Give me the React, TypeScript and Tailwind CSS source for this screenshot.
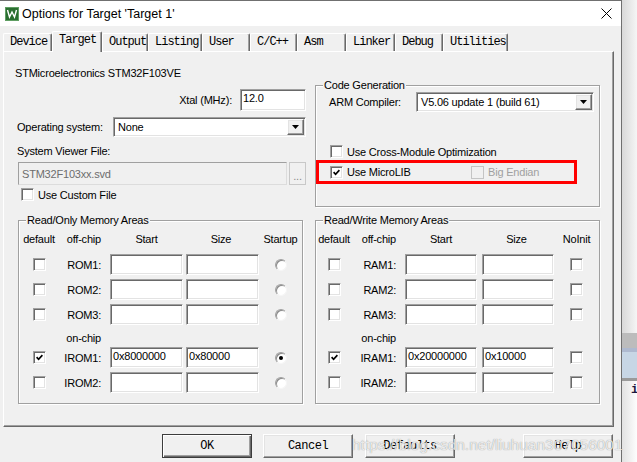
import React from 'react'

const sunken =
  'border border-t-[#a0a0a0] border-l-[#a0a0a0] border-b-white border-r-white shadow-[inset_1px_1px_0_#696969,inset_-1px_-1px_0_#e3e3e3]'
const raised =
  'border border-t-white border-l-white border-b-[#696969] border-r-[#696969] shadow-[inset_-1px_-1px_0_#a0a0a0,inset_1px_1px_0_#e3e3e3]'

function Check({ checked = false, disabled = false }: { checked?: boolean; disabled?: boolean }) {
  return (
    <span
      className={`flex h-[13px] w-[13px] shrink-0 items-center justify-center ${
        disabled ? 'border border-[#c4c4c4] bg-[#f0f0f0]' : `bg-white ${sunken}`
      }`}
    >
      {checked && (
        <svg width="7" height="7" viewBox="0 0 7 7">
          <path d="M0.6 3.2 L2.6 5.3 L6.4 1.2" stroke="#000" strokeWidth="1.7" fill="none" />
        </svg>
      )}
    </span>
  )
}

function Radio({ on = false }: { on?: boolean }) {
  return (
    <span className="flex h-[12px] w-[12px] items-center justify-center rounded-full border border-t-[#a0a0a0] border-l-[#a0a0a0] border-b-[#f5f5f5] border-r-[#f5f5f5] bg-white shadow-[inset_1px_1px_0_#8a8a8a]">
      {on && <span className="h-[4px] w-[4px] rounded-full bg-black" />}
    </span>
  )
}

function Field({ value = '', className = '' }: { value?: string; className?: string }) {
  return (
    <div className={`h-[21px] shrink-0 bg-white pl-[2px] pt-[1px] leading-[15px] ${sunken} ${className}`}>
      {value}
    </div>
  )
}

function Select({ value, className = '' }: { value: string; className?: string }) {
  return (
    <div className={`flex h-[20px] shrink-0 bg-white p-[1px] ${sunken} ${className}`}>
      <span className="flex-1 self-center pl-[3px]">{value}</span>
      <span className={`flex w-[17px] items-center justify-center bg-[#f0f0f0] ${raised}`}>
        <svg width="7" height="4" viewBox="0 0 7 4">
          <path d="M0 0 H7 L3.5 4 Z" fill="#000" />
        </svg>
      </span>
    </div>
  )
}

function Group({ title, className = '', children }: { title: string; className?: string; children?: React.ReactNode }) {
  return (
    <div className={`relative shrink-0 border border-[#a0a0a0] shadow-[1px_1px_0_#fff,inset_1px_1px_0_#fff] ${className}`}>
      <span className="absolute left-[7px] top-[-8px] bg-[#f0f0f0] px-[1px] leading-[14px]">{title}</span>
      {children}
    </div>
  )
}

type Mem = { label: string; checked?: boolean; start?: string; size?: string; on?: boolean }
type Cols = { a: string; b: string; f: string; g: string; e: string }

function MemArea({
  title,
  last,
  radio,
  off,
  chip,
  c,
  className,
}: {
  title: string
  last: string
  radio?: boolean
  off: Mem[]
  chip: Mem[]
  c: Cols
  className: string
}) {
  const row = (r: Mem, mt: string) => (
    <div key={r.label} className={`flex h-[21px] items-center ${mt}`}>
      <div className={`flex shrink-0 justify-center ${c.a}`}>
        <Check checked={r.checked} />
      </div>
      <div className={`shrink-0 text-right ${c.b}`}>{r.label}</div>
      <Field className={c.f} value={r.start} />
      <Field className={c.g} value={r.size} />
      <div className={`flex shrink-0 justify-center ${c.e}`}>{radio ? <Radio on={r.on} /> : <Check />}</div>
    </div>
  )
  return (
    <Group title={title} className={className}>
      <div className="mt-[11px] flex h-[14px]">
        <div className={`shrink-0 text-center ${c.a}`}>default</div>
        <div className={`shrink-0 text-right ${c.b}`}>off-chip</div>
        <div className={`shrink-0 text-center ${c.f}`}>Start</div>
        <div className={`shrink-0 pr-[3px] text-center ${c.g}`}>Size</div>
        <div className={`shrink-0 text-center ${c.e}`}>{last}</div>
      </div>
      {off.map((r, i) => row(r, i === 0 ? 'mt-[8px]' : 'mt-[4px]'))}
      <div className="mt-[6px] flex h-[14px]">
        <div className={`shrink-0 ${c.a}`} />
        <div className={`shrink-0 text-right ${c.b}`}>on-chip</div>
      </div>
      {chip.map((r, i) => row(r, i === 0 ? 'mt-[2px]' : 'mt-[4px]'))}
    </Group>
  )
}

const tabs = [
  { name: 'Device', w: 'w-[49px]' },
  { name: 'Target', w: 'w-[50px]', active: true },
  { name: 'Output', w: 'w-[46px]' },
  { name: 'Listing', w: 'w-[54px]' },
  { name: 'User', w: 'w-[48px]' },
  { name: 'C/C++', w: 'w-[47px]' },
  { name: 'Asm', w: 'w-[49px]' },
  { name: 'Linker', w: 'w-[49px]' },
  { name: 'Debug', w: 'w-[48px]' },
  { name: 'Utilities', w: 'w-[65px]' },
]

function Btn({ label, def = false, className = '' }: { label: string; def?: boolean; className?: string }) {
  return (
    <div
      className={`flex h-[24px] w-[90px] shrink-0 items-center justify-center bg-[#f0f0f0] ${
        def
          ? 'border border-[#3c3c3c] shadow-[inset_1px_1px_0_#fff,inset_-1px_-1px_0_#696969,inset_-2px_-2px_0_#a0a0a0]'
          : raised
      } ${className}`}
    >
      {label}
    </div>
  )
}

export default function App() {
  return (
    <div className="relative flex h-[462px] w-[637px] overflow-hidden bg-white font-['Liberation_Sans',Arial,sans-serif] text-[11px] leading-[14px] tracking-[-0.2px] text-black">
      {/* dialog window */}
      <div className="flex h-full w-[622px] shrink-0 flex-col border-r border-t border-[#707070] bg-[#f0f0f0]">
        {/* title bar */}
        <div className="flex h-[25px] shrink-0 items-center bg-white">
          <svg className="ml-[5px]" width="14" height="14" viewBox="0 0 14 14">
            <rect x="0.5" y="0.5" width="13" height="13" fill="#2a6e30" stroke="#5f9e63" />
            <path d="M2.5 3 L4.5 10 L7 5 L9.5 10 L11.5 3" stroke="#fff" strokeWidth="1.4" fill="none" />
          </svg>
          <span className="ml-[3px] text-[12.5px] leading-[16px] tracking-normal">Options for Target 'Target 1'</span>
          <svg className="ml-auto mr-[9px]" width="11" height="11" viewBox="0 0 11 11">
            <path d="M0.5 0.5 L10.5 10.5 M10.5 0.5 L0.5 10.5" stroke="#000" strokeWidth="1" />
          </svg>
        </div>

        {/* tabs */}
        <div className="relative z-10 mt-[5px] flex h-[20px] shrink-0 items-end pl-[3px] font-['Liberation_Mono',monospace] text-[12px] tracking-[-1px]">
          {tabs.map((t) =>
            t.active ? (
              <div
                key={t.name}
                className={`-mb-px h-[21px] shrink-0 rounded-t-[2px] border-l border-r border-t border-l-white border-r-[#696969] border-t-white bg-[#f0f0f0] pl-[6px] leading-[17px] shadow-[inset_-1px_0_0_#a0a0a0] ${t.w}`}
              >
                {t.name}
              </div>
            ) : (
              <div
                key={t.name}
                className={`h-[18px] shrink-0 rounded-t-[2px] border-l border-r border-t border-l-white border-r-[#696969] border-t-white pl-[6px] leading-[17px] shadow-[inset_-1px_0_0_#a0a0a0] ${t.w}`}
              >
                {t.name}
              </div>
            )
          )}
        </div>

        {/* tab panel */}
        <div className="ml-[3px] flex h-[376px] w-[611px] shrink-0 flex-col border border-b-[#696969] border-l-white border-r-[#696969] border-t-white pl-[11px] shadow-[inset_-1px_-1px_0_#a0a0a0]">
          <div className="flex h-[155px] shrink-0">
            {/* left column */}
            <div className="flex w-[291px] shrink-0 flex-col">
              <div className="mt-[14px] h-[14px]">STMicroelectronics STM32F103VE</div>
              <div className="mt-[9px] flex h-[22px] items-center justify-end">
                <span className="mr-[8px]">Xtal (MHz):</span>
                <div className={`h-[22px] w-[66px] bg-white pl-[2px] pt-[1px] leading-[15px] ${sunken}`}>12.0</div>
              </div>
              <div className="mt-[6px] flex h-[20px] items-center">
                <span className="w-[98px] shrink-0 pl-[2px]">Operating system:</span>
                <Select value="None" className="w-[193px]" />
              </div>
              <div className="mt-[7px] h-[14px] pl-[2px]">System Viewer File:</div>
              <div className="mt-[4px] flex h-[23px] pl-[3px]">
                <div className="flex w-[269px] items-center border border-b-[#dcdcdc] border-l-[#a0a0a0] border-r-[#dcdcdc] border-t-[#a0a0a0] bg-[#f0f0f0] pl-[3px] text-[#6d6d6d]">
                  STM32F103xx.svd
                </div>
                <div className="ml-[2px] flex w-[17px] items-end justify-center border border-[#c8c8c8] bg-[#f0f0f0] pb-[3px] leading-[10px] text-[#8a8a8a]">
                  ...
                </div>
              </div>
              <div className="mt-[3px] flex h-[13px] items-center pl-[6px]">
                <Check />
                <span className="ml-[4px]">Use Custom File</span>
              </div>
            </div>

            {/* right column */}
            <div className="ml-[9px] w-[285px] shrink-0">
              <Group title="Code Generation" className="mt-[33px] h-[122px] w-[285px]">
                <div className="mt-[6px] flex h-[20px] items-center">
                  <span className="w-[100px] shrink-0 pl-[13px]">ARM Compiler:</span>
                  <Select value="V5.06 update 1 (build 61)" className="w-[178px]" />
                </div>
                <div className="mt-[33px] flex h-[13px] items-center pl-[14px]">
                  <Check />
                  <span className="ml-[4px]">Use Cross-Module Optimization</span>
                </div>
                <div className="mt-[2px] flex h-[24px] w-[261px] items-center border-[3px] border-[#ff0000] pl-[11px]">
                  <div className="flex w-[141px] shrink-0 items-center">
                    <Check checked />
                    <span className="ml-[4px]">Use MicroLIB</span>
                  </div>
                  <Check disabled />
                  <span className="ml-[4px] text-[#a0a0a0]">Big Endian</span>
                </div>
              </Group>
            </div>
          </div>

          <div className="mt-[13px] flex">
            <MemArea
              title="Read/Only Memory Areas"
              last="Startup"
              radio
              className="ml-[3px] h-[184px] w-[285px]"
              c={{ a: 'w-[40px]', b: 'w-[51px] pr-[9px]', f: 'w-[73px]', g: 'ml-[3px] w-[73px]', e: 'w-[43px]' }}
              off={[{ label: 'ROM1:' }, { label: 'ROM2:' }, { label: 'ROM3:' }]}
              chip={[
                { label: 'IROM1:', checked: true, start: '0x8000000', size: '0x80000', on: true },
                { label: 'IROM2:' },
              ]}
            />
            <MemArea
              title="Read/Write Memory Areas"
              last="NoInit"
              className="ml-[12px] h-[184px] w-[285px]"
              c={{ a: 'w-[36px]', b: 'w-[53px] pr-[9px]', f: 'w-[72px]', g: 'ml-[5px] w-[72px]', e: 'w-[45px]' }}
              off={[{ label: 'RAM1:' }, { label: 'RAM2:' }, { label: 'RAM3:' }]}
              chip={[
                { label: 'IRAM1:', checked: true, start: '0x20000000', size: '0x10000' },
                { label: 'IRAM2:' },
              ]}
            />
          </div>
        </div>

        {/* buttons */}
        <div className="mt-[7px] flex pl-[162px] font-['Liberation_Mono',monospace] text-[12px] tracking-[-0.5px]">
          <Btn label="OK" def />
          <Btn label="Cancel" className="ml-[11px]" />
          <Btn label="Defaults" className="ml-[12px]" />
          <Btn label="Help" className="ml-[68px]" />
        </div>
      </div>

      {/* desktop behind the dialog */}
      <div className="flex h-full flex-1 flex-col">
        <div className="h-[333px] bg-linear-to-r from-[#d9d9d9] to-[#f7f7f7]" />
        <div className="h-[15px] bg-[#bcbcbc]" />
        <div className="h-[4px] bg-[#aeb9cf]" />
        <div className="h-[26px] bg-[#c7d6e5]" />
        <div className="h-[3px] bg-[#9a9a9a]" />
        <div className="flex-1 bg-linear-to-r from-[#e2e2e2] to-white pl-[9px] pt-[2px] font-['Liberation_Mono',monospace] text-[12px] font-bold text-[#1a1a40]">
          i
        </div>
      </div>

      {/* blog watermark */}
      <div className="pointer-events-none absolute left-[352px] top-[436px] text-[15.5px] leading-[18px] tracking-normal text-[#fafafa]/85 [text-shadow:0_0_1px_rgba(0,0,0,0.45)]">
        https://blog.csdn.net/liuhuan307056001
      </div>
    </div>
  )
}
